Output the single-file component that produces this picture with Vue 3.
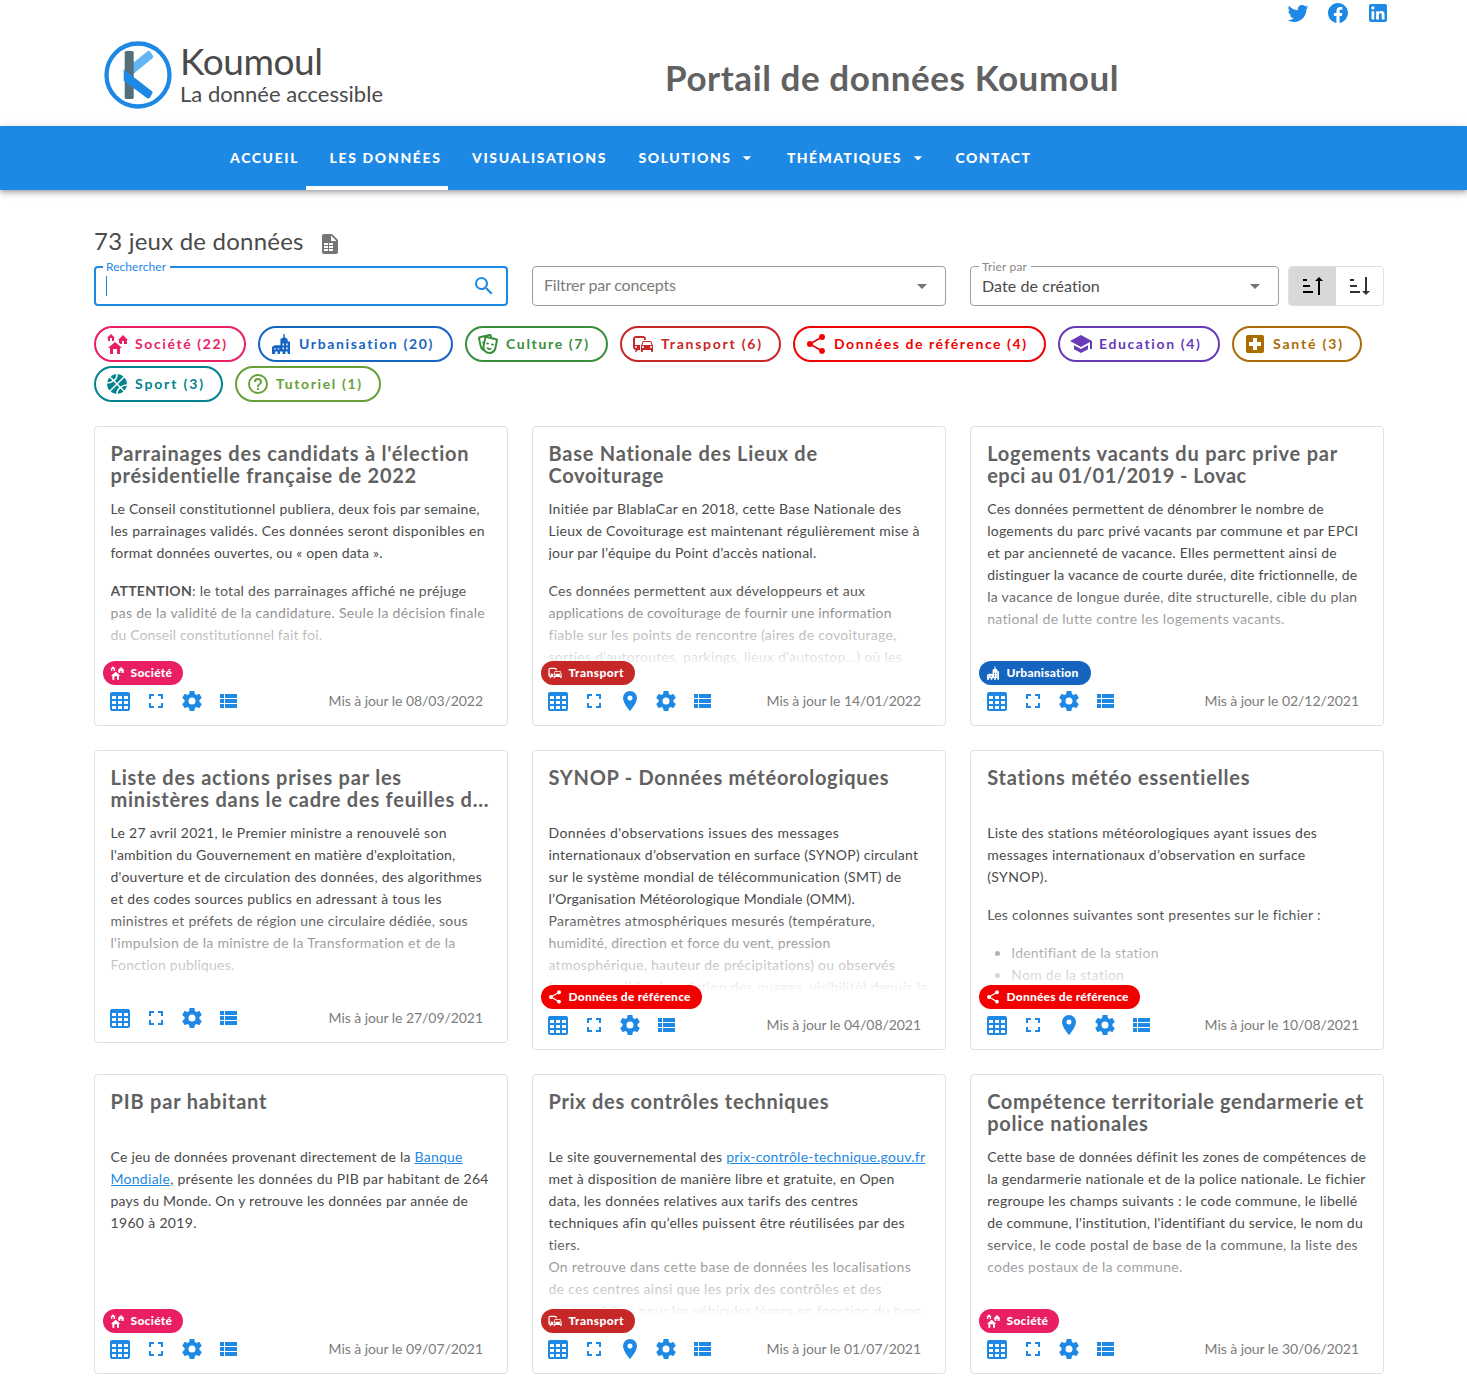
<script setup>
import { h } from 'vue'

const shapes = {
  twitter: 'M22.46,6C21.69,6.35 20.86,6.58 20,6.69C20.88,6.16 21.56,5.32 21.88,4.31C21.05,4.81 20.13,5.16 19.16,5.36C18.37,4.5 17.26,4 16,4C13.65,4 11.73,5.92 11.73,8.29C11.73,8.63 11.77,8.96 11.84,9.27C8.28,9.09 5.11,7.38 3,4.79C2.63,5.42 2.42,6.16 2.42,6.94C2.42,8.43 3.17,9.75 4.33,10.5C3.62,10.5 2.96,10.3 2.38,10V10.03C2.38,12.11 3.86,13.85 5.82,14.24C5.46,14.34 5.08,14.39 4.69,14.39C4.42,14.39 4.15,14.36 3.89,14.31C4.43,16 6,17.26 7.89,17.29C6.43,18.45 4.58,19.13 2.56,19.13C2.22,19.13 1.88,19.11 1.54,19.07C3.44,20.29 5.7,21 8.12,21C16,21 20.33,14.46 20.33,8.79C20.33,8.6 20.33,8.42 20.32,8.23C21.16,7.63 21.88,6.87 22.46,6Z',
  facebook: 'M12 2.04C6.5 2.04 2 6.53 2 12.06C2 17.06 5.66 21.21 10.44 21.96V14.96H7.9V12.06H10.44V9.85C10.44 7.34 11.93 5.96 14.22 5.96C15.31 5.96 16.45 6.15 16.45 6.15V8.62H15.19C13.95 8.62 13.56 9.39 13.56 10.18V12.06H16.34L15.89 14.96H13.56V21.96A10 10 0 0 0 22 12.06C22 6.53 17.5 2.04 12 2.04Z',
  linkedin: 'M19 3A2 2 0 0 1 21 5V19A2 2 0 0 1 19 21H5A2 2 0 0 1 3 19V5A2 2 0 0 1 5 3H19M18.5 18.5V13.2A3.26 3.26 0 0 0 15.24 9.94C14.39 9.94 13.4 10.46 12.92 11.24V10.13H10.13V18.5H12.92V13.57C12.92 12.8 13.54 12.17 14.31 12.17A1.4 1.4 0 0 1 15.71 13.57V18.5H18.5M6.88 8.56A1.68 1.68 0 0 0 8.56 6.88C8.56 5.95 7.81 5.19 6.88 5.19A1.69 1.69 0 0 0 5.19 6.88C5.19 7.81 5.95 8.56 6.88 8.56M8.27 18.5V10.13H5.5V18.5H8.27Z',
  magnify: 'M9.5,3A6.5,6.5 0 0,1 16,9.5C16,11.11 15.41,12.59 14.44,13.73L14.71,14H15.5L20.5,19L19,20.5L14,15.5V14.71L13.73,14.44C12.59,15.41 11.11,16 9.5,16A6.5,6.5 0 0,1 3,9.5A6.5,6.5 0 0,1 9.5,3M9.5,5C7,5 5,7 5,9.5C5,12 7,14 9.5,14C12,14 14,12 14,9.5C14,7 12,5 9.5,5Z',
  caret: 'M7,10L12,15L17,10H7Z',
  file: 'M14 2H6C4.89 2 4 2.9 4 4V20C4 21.11 4.89 22 6 22H18C19.11 22 20 21.11 20 20V8L14 2M10 19H6V17H10V19M10 16H6V14H10V16M10 13H6V11H10V13M15 19H11V17H15V19M15 16H11V14H15V16M15 13H11V11H15V13M13 9V3.5L18.5 9H13Z',
  asc: 'M19 7H22L18 3L14 7H17V21H19M2 17H12V19H2M6 5V7H2V5M2 11H9V13H2V11Z',
  desc: 'M19 17H22L18 21L14 17H17V3H19M2 17H12V19H2M6 5V7H2V5M2 11H9V13H2V11Z',
  homes: 'M17,16H15V22H12V17H8V22H5V16H3L10,10L17,16M6,2L10,6H9V9H7V6H5V9H3V6H2L6,2M18,3L23,8H22V12H19V9H17V12H15.34L14,10.87V8H13L18,3Z',
  city: 'M14.4 2H15.8V5.2L18.6 7V9.5H21V22H18.6V19.5H16.4V22H13.6V19.5H11V22H8.6V19.5H6.2V22H3V15L5.5 13.2H11.4V7L14.4 5.2ZM13.6 11.6V13.4H15V11.6ZM17.2 11.6V13.4H18.6V11.6ZM13.6 15.4V17.2H15V15.4ZM17.2 15.4V17.2H18.6V15.4ZM5.2 16.2V17.6H6.6V16.2ZM8.8 16.2V17.6H10.2V16.2Z',
  masks: 'M8.11,19.45C5.94,18.65 4.22,16.78 3.71,14.35L2.05,6.54C1.81,5.46 2.5,4.4 3.58,4.17L13.35,2.1L13.38,2.09C14.45,1.88 15.5,2.57 15.72,3.63L16.07,5.3L20.42,6.23H20.45C21.5,6.47 22.18,7.53 21.96,8.59L20.3,16.41C19.5,20.18 15.78,22.6 12,21.79C10.42,21.46 9.08,20.61 8.11,19.45V19.45M20,8.18L10.23,6.1L8.57,13.92V13.95C8,16.63 9.73,19.27 12.42,19.84C15.11,20.41 17.77,18.69 18.34,16L20,8.18M16,16.5C15.37,17.57 14.11,18.16 12.83,17.89C11.56,17.62 10.65,16.57 10.5,15.34L16,16.5M8.47,5.17L4,6.13L5.66,13.94L5.67,13.97C5.82,14.68 6.12,15.32 6.53,15.87C6.43,15.1 6.45,14.3 6.62,13.5L7.05,11.5C6.6,11.42 6.21,11.17 6,10.81C6.06,10.2 6.56,9.66 7.25,9.5H7.5L8.28,5.69C8.32,5.5 8.38,5.33 8.47,5.17M15.03,12.23C15.35,11.7 16.03,11.42 16.72,11.57C17.41,11.71 17.91,12.24 18,12.86C17.67,13.38 17,13.66 16.3,13.5C15.61,13.37 15.11,12.84 15.03,12.23M10.15,11.19C10.47,10.66 11.14,10.38 11.83,10.53C12.5,10.67 13.03,11.21 13.11,11.82C12.78,12.34 12.11,12.63 11.42,12.5C10.73,12.33 10.23,11.8 10.15,11.19M11.97,4.43L13.93,4.85L13.77,4.05L11.97,4.43Z',
  commute: 'M12 4H5C3.34 4 2 5.34 2 7v8c0 1.66 1.34 3 3 3l-1 1v1h1l2-2.03L9 18v-5H4V5.98L13 6v2h2V7c0-1.66-1.34-3-3-3zM5 14c.55 0 1 .45 1 1s-.45 1-1 1-1-.45-1-1 .45-1 1-1zm15.57-4.34c-.14-.4-.52-.66-.97-.66h-7.19c-.46 0-.83.26-.98.66L10 13.77l.01 5.51c0 .38.31.72.69.72h.62c.38 0 .68-.38.68-.76V18h8v1.24c0 .38.31.76.69.76h.61c.38 0 .69-.34.69-.72l.01-1.37v-4.14l-1.43-4.11zm-8.16.34h7.19l1.03 3h-9.25l1.03-3zM12 16c-.55 0-1-.45-1-1s.45-1 1-1 1 .45 1 1-.45 1-1 1zm8 0c-.55 0-1-.45-1-1s.45-1 1-1 1 .45 1 1-.45 1-1 1z',
  share: 'M18,16.08C17.24,16.08 16.56,16.38 16.04,16.85L8.91,12.7C8.96,12.47 9,12.24 9,12C9,11.76 8.96,11.53 8.91,11.3L15.96,7.19C16.5,7.69 17.21,8 18,8A3,3 0 0,0 21,5A3,3 0 0,0 18,2A3,3 0 0,0 15,5C15,5.24 15.04,5.47 15.09,5.7L8.04,9.81C7.5,9.31 6.79,9 6,9A3,3 0 0,0 3,12A3,3 0 0,0 6,15C6.79,15 7.5,14.69 8.04,14.19L15.16,18.34C15.11,18.55 15.08,18.77 15.08,19C15.08,20.61 16.39,21.91 18,21.91C19.61,21.91 20.92,20.61 20.92,19A2.92,2.92 0 0,0 18,16.08Z',
  school: 'M12,3L1,9L12,15L21,10.09V17H23V9M5,13.18V17.18L12,21L19,17.18V13.18L12,17L5,13.18Z',
  health: 'M18 14H14V18H10V14H6V10H10V6H14V10H18M19 3H5C3.9 3 3 3.9 3 5V19A2 2 0 0 0 5 21H19A2 2 0 0 0 21 19V5C21 3.9 20.1 3 19 3Z',
  help: 'M11,18H13V16H11V18M12,2A10,10 0 0,0 2,12A10,10 0 0,0 12,22A10,10 0 0,0 22,12A10,10 0 0,0 12,2M12,20C7.59,20 4,16.41 4,12C4,7.59 7.59,4 12,4C16.41,4 20,7.59 20,12C20,16.41 16.41,20 12,20M12,6A4,4 0 0,0 8,10H10A2,2 0 0,1 12,8A2,2 0 0,1 14,10C14,12 11,11.75 11,15H13C13,12.75 16,12.5 16,10A4,4 0 0,0 12,6Z',
  table: 'M4,3H20A2,2 0 0,1 22,5V20A2,2 0 0,1 20,22H4A2,2 0 0,1 2,20V5A2,2 0 0,1 4,3M4,7V10H8V7H4M10,7V10H14V7H10M20,10V7H16V10H20M4,12V15H8V12H4M4,20H8V17H4V20M10,12V15H14V12H10M10,20H14V17H10V20M20,20V17H16V20H20M20,12H16V15H20V12Z',
  full: 'M5,5H10V7H7V10H5V5M14,5H19V10H17V7H14V5M17,14H19V19H14V17H17V14M10,17V19H5V14H7V17H10Z',
  cog: 'M12,15.5A3.5,3.5 0 0,1 8.5,12A3.5,3.5 0 0,1 12,8.5A3.5,3.5 0 0,1 15.5,12A3.5,3.5 0 0,1 12,15.5M19.43,12.97C19.47,12.65 19.5,12.33 19.5,12C19.5,11.67 19.47,11.34 19.43,11L21.54,9.37C21.73,9.22 21.78,8.95 21.66,8.73L19.66,5.27C19.54,5.05 19.27,4.96 19.05,5.05L16.56,6.05C16.04,5.66 15.5,5.32 14.87,5.07L14.5,2.42C14.46,2.18 14.25,2 14,2H10C9.75,2 9.54,2.18 9.5,2.42L9.13,5.07C8.5,5.32 7.96,5.66 7.44,6.05L4.95,5.05C4.73,4.96 4.46,5.05 4.34,5.27L2.34,8.73C2.21,8.95 2.27,9.22 2.46,9.37L4.57,11C4.53,11.34 4.5,11.67 4.5,12C4.5,12.33 4.53,12.65 4.57,12.97L2.46,14.63C2.27,14.78 2.21,15.05 2.34,15.27L4.34,18.73C4.46,18.95 4.73,19.03 4.95,18.95L7.44,17.94C7.96,18.34 8.5,18.68 9.13,18.93L9.5,21.58C9.54,21.82 9.75,22 10,22H14C14.25,22 14.46,21.82 14.5,21.58L14.87,18.93C15.5,18.67 16.04,18.34 16.56,17.94L19.05,18.95C19.27,19.03 19.54,18.95 19.66,18.73L21.66,15.27C21.78,15.05 21.73,14.78 21.54,14.63L19.43,12.97Z',
  list: 'M9,5V9H21V5M9,19H21V15H9M9,14H21V10H9M4,9H8V5H4M4,19H8V15H4M4,14H8V10H4V14Z',
  pin: 'M12,11.5A2.5,2.5 0 0,1 9.5,9A2.5,2.5 0 0,1 12,6.5A2.5,2.5 0 0,1 14.5,9A2.5,2.5 0 0,1 12,11.5M12,2A7,7 0 0,0 5,9C5,14.25 12,22 12,22C12,22 19,14.25 19,9A7,7 0 0,0 12,2Z',
}

const Icon = ({ name, size = 24 }) => {
  const content = name === 'ball'
    ? [
        h('circle', { cx: 12, cy: 12, r: 10, fill: 'currentColor' }),
        h('path', { d: 'M4 4L20 20M20 4L4 20M12 1Q12.500 6.500 8.500 8.500Q5.500 11.500 1 11M23 13Q18.500 12.500 15.500 15.500Q11.500 18 12 23', fill: 'none', stroke: '#fff', 'stroke-width': 1.5 }),
      ]
    : [h('path', { d: shapes[name], fill: 'currentColor', 'fill-rule': name === 'city' ? 'evenodd' : 'nonzero' })]
  return h('svg', { viewBox: '0 0 24 24', width: size, height: size, style: { display: 'block', flex: 'none' } }, content)
}
Icon.props = ['name', 'size']

// Tracks the letters of a single line so that it spans the given width.
const vFit = {
  mounted(el, { value }) {
    if (!value) return
    const gaps = el.textContent.trim().length - 1
    el.style.letterSpacing = (value - el.getBoundingClientRect().width) / gaps + 'px'
  },
}

const nav = [
  { t: 'ACCUEIL', w: 67.5, gap: 32 },
  { t: 'LES DONNÉES', w: 110.5, gap: 32, active: true },
  { t: 'VISUALISATIONS', w: 133.5, gap: 33 },
  { t: 'SOLUTIONS', w: 91.5, gap: 30, menu: true },
  { t: 'THÉMATIQUES', w: 113.5, gap: 28, menu: true },
  { t: 'CONTACT', w: 74.5, gap: 0 },
]

const topics = [
  { t: 'Société (22)', icon: 'homes', c: '#e91e63', w: 152, f: 91 },
  { t: 'Urbanisation (20)', icon: 'city', c: '#1565c0', w: 195, f: 133.5 },
  { t: 'Culture (7)', icon: 'masks', c: '#388e3c', w: 143, f: 82 },
  { t: 'Transport (6)', icon: 'commute', c: '#c62828', w: 161, f: 100 },
  { t: 'Données de référence (4)', icon: 'share', c: '#f20000', w: 253, f: 192 },
  { t: 'Education (4)', icon: 'school', c: '#673ab7', w: 162, f: 101 },
  { t: 'Santé (3)', icon: 'health', c: '#a96c00', w: 130, f: 69 },
  { t: 'Sport (3)', icon: 'ball', c: '#00838f', w: 129, f: 68 },
  { t: 'Tutoriel (1)', icon: 'help', c: '#689f38', w: 146, f: 85 },
]

const tags = {
  soc: { t: 'Société', icon: 'homes', c: '#e91e63', w: 80, f: 41.5 },
  tra: { t: 'Transport', icon: 'commute', c: '#c62828', w: 94, f: 55 },
  urb: { t: 'Urbanisation', icon: 'city', c: '#1565c0', w: 112, f: 72 },
  ref: { t: 'Données de référence', icon: 'share', c: '#f20000', w: 161, f: 122 },
}

const base = ['table', 'full', 'cog', 'list']
const geo = ['table', 'full', 'pin', 'cog', 'list']

// Every line is [width, ...runs]; a run is a string, { b: bold } or { a: link }.
const cards = [
  {
    title: [[358.5, "Parrainages des candidats à l'élection"], [306, 'présidentielle française de 2022']],
    paras: [
      [[369.5, 'Le Conseil constitutionnel publiera, deux fois par semaine,'], [374, 'les parrainages validés. Ces données seront disponibles en'], [272, 'format données ouvertes, ou « open data ».']],
      [[355, { b: 'ATTENTION' }, ': le total des parrainages affiché ne préjuge'], [374, 'pas de la validité de la candidature. Seule la décision finale'], [212, 'du Conseil constitutionnel fait foi.']],
    ],
    tag: 'soc', icons: base, date: '08/03/2022',
  },
  {
    title: [[269, 'Base Nationale des Lieux de'], [115, 'Covoiturage']],
    paras: [
      [[352.5, 'Initiée par BlablaCar en 2018, cette Base Nationale des'], [371, 'Lieux de Covoiturage est maintenant régulièrement mise à'], [268, 'jour par l’équipe du Point d’accès national.']],
      [[316, 'Ces données permettent aux développeurs et aux'], [343.5, 'applications de covoiturage de fournir une information'], [347.5, 'fiable sur les points de rencontre (aires de covoiturage,'], [353.5, 'sorties d’autoroutes, parkings, lieux d’autostop…) où les']],
    ],
    tag: 'tra', icons: geo, date: '14/01/2022',
  },
  {
    title: [[350, 'Logements vacants du parc prive par'], [259, 'epci au 01/01/2019 - Lovac']],
    paras: [
      [[336, 'Ces données permettent de dénombrer le nombre de'], [371, 'logements du parc privé vacants par commune et par EPCI'], [349, 'et par ancienneté de vacance. Elles permettent ainsi de'], [370.5, 'distinguer la vacance de courte durée, dite frictionnelle, de'], [370, 'la vacance de longue durée, dite structurelle, cible du plan'], [297, 'national de lutte contre les logements vacants.']],
    ],
    tag: 'urb', icons: base, date: '02/12/2021',
  },
  {
    title: [[291, 'Liste des actions prises par les'], [378, 'ministères dans le cadre des feuilles d...']],
    paras: [
      [[336, 'Le 27 avril 2021, le Premier ministre a renouvelé son'], [345.5, "l'ambition du Gouvernement en matière d'exploitation,"], [371.5, "d'ouverture et de circulation des données, des algorithmes"], [331, 'et des codes sources publics en adressant à tous les'], [357, 'ministres et préfets de région une circulaire dédiée, sous'], [345, "l'impulsion de la ministre de la Transformation et de la"], [124, 'Fonction publiques.']],
    ],
    icons: base, date: '27/09/2021',
  },
  {
    title: [[340, 'SYNOP - Données météorologiques']],
    paras: [
      [[290.5, "Données d'observations issues des messages"], [370, 'internationaux d’observation en surface (SYNOP) circulant'], [353, 'sur le système mondial de télécommunication (SMT) de'], [306.5, 'l’Organisation Météorologique Mondiale (OMM).'], [326.5, 'Paramètres atmosphériques mesurés (température,'], [282, 'humidité, direction et force du vent, pression'], [346.5, 'atmosphérique, hauteur de précipitations) ou observés'], [379, '(temps sensible, description des nuages, visibilité) depuis la']],
    ],
    tag: 'ref', icons: base, date: '04/08/2021',
  },
  {
    title: [[263, 'Stations météo essentielles']],
    paras: [
      [[330, 'Liste des stations météorologiques ayant issues des'], [318.5, 'messages internationaux d’observation en surface'], [60, '(SYNOP).']],
      [[333, 'Les colonnes suivantes sont presentes sur le fichier :']],
    ],
    bullets: [[147.5, 'Identifiant de la station'], [113, 'Nom de la station']],
    tag: 'ref', icons: geo, date: '10/08/2021',
  },
  {
    title: [[156, 'PIB par habitant']],
    paras: [
      [[352, 'Ce jeu de données provenant directement de la ', { a: 'Banque' }], [378, { a: 'Mondiale' }, ', présente les données du PIB par habitant de 264'], [357.5, 'pays du Monde. On y retrouve les données par année de'], [86, '1960 à 2019.']],
    ],
    tag: 'soc', icons: base, date: '09/07/2021',
  },
  {
    title: [[280, 'Prix des contrôles techniques']],
    paras: [
      [[376.5, 'Le site gouvernemental des ', { a: 'prix-contrôle-technique.gouv.fr' }], [346, 'met à disposition de manière libre et gratuite, en Open'], [309.5, 'data, les données relatives aux tarifs des centres'], [356, 'techniques afin qu’elles puissent être réutilisées par des'], [31.5, 'tiers.'], [362, 'On retrouve dans cette base de données les localisations'], [333, 'de ces centres ainsi que les prix des contrôles et des'], [373.5, 'contre-visites pour les véhicules légers en fonction du type']],
    ],
    tag: 'tra', icons: geo, date: '01/07/2021',
  },
  {
    title: [[376, 'Compétence territoriale gendarmerie et'], [161, 'police nationales']],
    paras: [
      [[378, 'Cette base de données définit les zones de compétences de'], [378.5, 'la gendarmerie nationale et de la police nationale. Le fichier'], [370, 'regroupe les champs suivants : le code commune, le libellé'], [376, "de commune, l'institution, l'identifiant du service, le nom du"], [370.5, 'service, le code postal de base de la commune, la liste des'], [195, 'codes postaux de la commune.']],
    ],
    tag: 'soc', icons: base, date: '30/06/2021',
  },
]
</script>

<template>
  <div class="page">
    <header class="top">
      <div class="brand">
        <svg class="mark" width="68" height="68" viewBox="0 0 68 68">
          <circle cx="34" cy="34" r="31.500" fill="#fff" stroke="#1e88e5" stroke-width="4.300" />
          <path d="M29 22L43.500 10.200Q45 9.200 46.200 10.500L49 14.800Q49.800 16.200 48.500 17.300L29 33.200Z" fill="#64b5f6" />
          <rect x="20.700" y="10" width="9" height="48" rx="1.500" fill="#546e7a" />
          <path d="M19.700 28.300L48 50.200Q49.200 51.300 48.300 52.600L45.800 56.800Q44.700 58.200 43.200 57.200L19.700 39.700Z" fill="#1e88e5" />
        </svg>
        <div class="wordmark">
          <span v-fit="143" class="name">Koumoul</span>
          <span v-fit="203" class="motto">La donnée accessible</span>
        </div>
      </div>
      <h1><span v-fit="453.500">Portail de données Koumoul</span></h1>
      <div class="social">
        <Icon name="twitter" />
        <Icon name="facebook" />
        <Icon name="linkedin" />
      </div>
    </header>

    <nav class="bar">
      <a v-for="n in nav" :key="n.t" class="tab" :class="{ active: n.active }" :style="{ marginRight: n.gap + 'px' }">
        <span class="tabtext" :style="{ width: n.w + 'px' }"><span v-fit="n.w">{{ n.t }}</span></span>
        <Icon v-if="n.menu" name="caret" :size="20" />
      </a>
    </nav>

    <main>
      <div class="count"><span v-fit="209.500">73 jeux de données</span><Icon name="file" /></div>

      <div class="filters">
        <div class="field focus">
          <span class="label"><span v-fit="60">Rechercher</span></span>
          <i class="cursor"></i>
          <Icon name="magnify" />
        </div>
        <div class="field">
          <span v-fit="132" class="hint">Filtrer par concepts</span>
          <Icon name="caret" />
        </div>
        <div class="sorting">
          <div class="field">
            <span class="label"><span v-fit="45">Trier par</span></span>
            <span v-fit="118" class="value">Date de création</span>
            <Icon name="caret" />
          </div>
          <div class="toggle">
            <span class="on"><Icon name="asc" /></span>
            <span><Icon name="desc" /></span>
          </div>
        </div>
      </div>

      <div class="topics">
        <span v-for="p in topics" :key="p.t" class="topic" :style="{ color: p.c, width: p.w + 'px' }">
          <Icon :name="p.icon" /><span v-fit="p.f" class="caption">{{ p.t }}</span>
        </span>
      </div>

      <div class="grid">
        <article v-for="c in cards" :key="c.date" class="card" :class="{ untagged: !c.tag }">
          <h2><span v-for="l in c.title" :key="l[1]" v-fit="l[0]">{{ l[1] }}</span></h2>
          <div class="text">
            <p v-for="(p, i) in c.paras" :key="i">
              <span v-for="(l, j) in p" :key="j" v-fit="l[0]" class="line"><template v-for="(r, k) in l.slice(1)" :key="k"><b v-if="r.b">{{ r.b }}</b><a v-else-if="r.a">{{ r.a }}</a><template v-else>{{ r }}</template></template></span>
            </p>
            <ul v-if="c.bullets">
              <li v-for="l in c.bullets" :key="l[1]"><span v-fit="l[0]">{{ l[1] }}</span></li>
            </ul>
          </div>
          <span v-if="c.tag" class="tag" :style="{ background: tags[c.tag].c, width: tags[c.tag].w + 'px' }">
            <Icon :name="tags[c.tag].icon" :size="16" /><span v-fit="tags[c.tag].f" class="caption">{{ tags[c.tag].t }}</span>
          </span>
          <footer>
            <Icon v-for="n in c.icons" :key="n" :name="n" />
            <span v-fit="154.500" class="date">Mis à jour le {{ c.date }}</span>
          </footer>
        </article>
      </div>
    </main>
  </div>
</template>

<style>
body { background: #fff; }
</style>

<style scoped>
.page {
  box-sizing: border-box;
  width: 1467px;
  height: 1388px;
  overflow: hidden;
  font-family: Lato, "Open Sans", sans-serif;
  font-size: 14px;
  color: #4a4a4a;
  background: #fff;
}
span { white-space: nowrap; }
.top { height: 126px; display: flex; align-items: flex-start; }
.brand, h1, .social { flex: none; }
.brand { display: flex; width: 561px; padding: 41px 0 0 104px; }
.mark { flex: none; }
.wordmark { display: flex; flex-direction: column; align-items: flex-start; margin-top: -1px; padding-left: 8px; color: #4a4a4a; }
.name { font-size: 37px; line-height: 42px; }
.motto { font-size: 22px; line-height: 24px; }
h1 { margin: 54px 0 0; width: 621px; font-size: 35px; line-height: 46px; font-weight: 700; color: #616161; }
h1 span, .count span { display: inline-block; }
.social { display: flex; align-items: center; gap: 16px; height: 26px; color: #1e88e5; }
.bar {
  position: relative;
  display: flex;
  height: 64px;
  padding-left: 230px;
  background: #1e88e5;
  color: #fff;
  font-weight: 900;
  font-size: 14px;
  box-shadow: 0 2px 4px -1px rgba(0,0,0,.2), 0 4px 5px rgba(0,0,0,.14), 0 1px 10px rgba(0,0,0,.12);
}
.tab { position: relative; display: flex; align-items: center; gap: 7px; }
.tabtext, .caption { padding-bottom: 2px; }
.active::after { content: ""; position: absolute; left: -24px; right: -8px; bottom: 0; height: 4px; background: #fff; }
main { padding: 36px 83px 0 94px; }
.count { display: flex; align-items: center; gap: 14px; height: 32px; font-size: 24px; }
.count span { padding-bottom: 3px; }
.count svg { color: #757575; margin-top: 4px; }
.filters { display: flex; gap: 24px; margin-top: 8px; }
.field {
  position: relative;
  box-sizing: border-box;
  display: flex;
  align-items: center;
  justify-content: space-between;
  width: 414px;
  height: 40px;
  padding: 0 11px;
  border: 1px solid #9e9e9e;
  border-radius: 4px;
  font-size: 16px;
}
.field svg { color: #757575; }
.field.focus { border: 2px solid #1e88e5; padding: 0 10px; }
.field.focus svg, .field.focus .label { color: #1e88e5; }
.label { position: absolute; left: 8px; top: -7px; padding: 0 4px 0 3px; background: #fff; color: #888; font-size: 12px; line-height: 14px; }
.focus .label { left: 7px; top: -8px; }
.cursor { width: 1px; height: 20px; background: #1e88e5; }
.hint { color: #7c7c7c; padding-bottom: 3px; }
.value { padding-bottom: 1px; }
.sorting { display: flex; gap: 9px; }
.sorting .field { width: 309px; }
.toggle { display: flex; box-sizing: border-box; width: 96px; height: 40px; border: 1px solid #e0e0e0; border-radius: 4px; overflow: hidden; color: #333; }
.toggle span { display: flex; flex: 1; align-items: center; justify-content: center; }
.toggle .on { background: #d8d8d8; color: #000; }
.topics { display: flex; flex-wrap: wrap; gap: 4px 12px; margin-top: 20px; }
.topic {
  box-sizing: border-box;
  display: flex;
  align-items: center;
  gap: 6px;
  height: 36px;
  padding-left: 9px;
  border: 2px solid currentColor;
  border-radius: 18px;
  font-weight: 700;
}
.grid { display: grid; grid-template-columns: repeat(3, 414px); gap: 24px; margin-top: 24px; align-items: start; }
.card {
  position: relative;
  box-sizing: border-box;
  display: flex;
  flex-direction: column;
  height: 300px;
  padding: 15px 0 0 15.5px;
  border: 1px solid #e0e0e0;
  border-radius: 4px;
}
.card:nth-child(3n) { padding-left: 16.2px; }
.card.untagged { height: 293px; }
h2 { margin: 0; height: 56px; font-size: 20px; line-height: 22px; font-weight: 700; color: #616161; }
h2 span, .line { display: block; width: max-content; }
.text { position: relative; height: 170px; overflow: hidden; line-height: 22px; }
.text::after {
  content: "";
  position: absolute;
  inset: 88px 0 0 0;
  background: linear-gradient(rgba(255,255,255,0), rgba(255,255,255,.12) 12%, rgba(255,255,255,.4) 34%, rgba(255,255,255,.64) 60%, rgba(255,255,255,.84) 88%, #fff);
}
.text p { margin: 0 0 16px; }
.text a { color: #1e88e5; text-decoration: underline; }
.text ul { margin: 0; padding-left: 24px; }
.text li span { display: inline-block; }
.tag {
  position: absolute;
  left: 8px;
  bottom: 40px;
  box-sizing: border-box;
  display: flex;
  align-items: center;
  gap: 6px;
  height: 24px;
  padding-left: 5.5px;
  border-radius: 12px;
  color: #fff;
  font-size: 12px;
  font-weight: 900;
}
footer { display: flex; align-items: center; gap: 12px; height: 24px; margin: auto 24px 12px -2.500px; color: #1e88e5; }
.date { margin-left: auto; padding-bottom: 2px; color: #7c7c7c; }
</style>
